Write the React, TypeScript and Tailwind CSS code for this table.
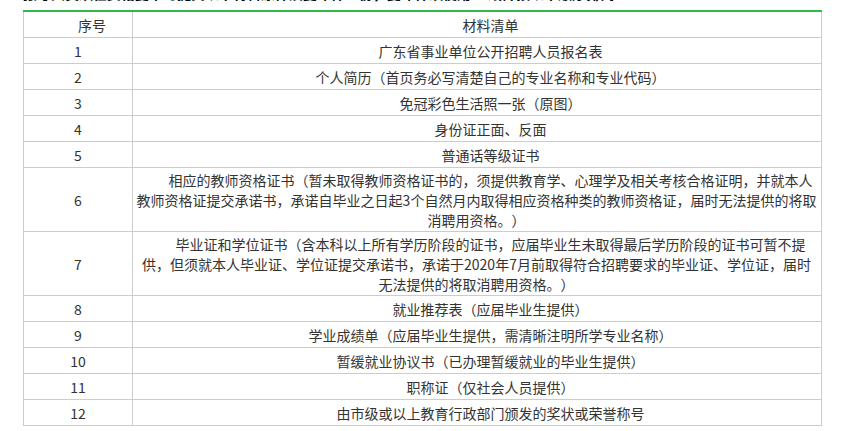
import React from "react";

type Row = { n: string; lines: string[] };

const rows: Row[] = [
  { n: "1", lines: ["广东省事业单位公开招聘人员报名表"] },
  { n: "2", lines: ["个人简历（首页务必写清楚自己的专业名称和专业代码）"] },
  { n: "3", lines: ["免冠彩色生活照一张（原图）"] },
  { n: "4", lines: ["身份证正面、反面"] },
  { n: "5", lines: ["普通话等级证书"] },
  {
    n: "6",
    lines: [
      "相应的教师资格证书（暂未取得教师资格证书的，须提供教育学、心理学及相关考核合格证明，并就本人",
      "教师资格证提交承诺书，承诺自毕业之日起3个自然月内取得相应资格种类的教师资格证，届时无法提供的将取",
      "消聘用资格。）",
    ],
  },
  {
    n: "7",
    lines: [
      "毕业证和学位证书（含本科以上所有学历阶段的证书，应届毕业生未取得最后学历阶段的证书可暂不提",
      "供，但须就本人毕业证、学位证提交承诺书，承诺于2020年7月前取得符合招聘要求的毕业证、学位证，届时",
      "无法提供的将取消聘用资格。）",
    ],
  },
  { n: "8", lines: ["就业推荐表（应届毕业生提供）"] },
  { n: "9", lines: ["学业成绩单（应届毕业生提供，需清晰注明所学专业名称）"] },
  { n: "10", lines: ["暂缓就业协议书（已办理暂缓就业的毕业生提供）"] },
  { n: "11", lines: ["职称证（仅社会人员提供）"] },
  { n: "12", lines: ["由市级或以上教育行政部门颁发的奖状或荣誉称号"] },
];

export default function App() {
  return (
    <div
      className="h-[431px] w-[842px] overflow-hidden bg-white text-[14px] leading-[20px] text-[#333333] [text-spacing-trim:space-all]"
      style={{ fontFamily: '"Noto Sans CJK SC", "Noto Sans", sans-serif' }}
    >
      <div className="-mt-[17px] mb-[7px] ml-[23px] w-[640px] overflow-hidden whitespace-nowrap font-bold text-black">
        报考人员须在资格复审时提交以下材料原件及复印件一份，复印件须使用A4纸并按以下顺序排列：
      </div>
      <div className="ml-[23px] w-[799px]">
        <div className="h-[2px] bg-[#2fb84f]" />
        <div className="border-x border-[#cccccc]">
          <div className="flex h-[26px] border-b border-[#cccccc]">
            <div className="flex w-[109px] shrink-0 items-center justify-center border-r border-[#cccccc] px-[3px] indent-[2em]">
              序号
            </div>
            <div className="flex w-[687px] items-center justify-center px-[3px] indent-[2em]">
              材料清单
            </div>
          </div>
          {rows.map((r) => {
            const multi = r.lines.length > 1;
            return (
              <div
                key={r.n}
                className={`flex border-b border-[#cccccc] ${multi ? "h-[64px]" : "h-[26px]"}`}
              >
                <div className="flex w-[109px] shrink-0 items-center justify-center border-r border-[#cccccc] px-[3px]">
                  {r.n}
                </div>
                <div className="flex w-[687px] items-center justify-center px-[3px]">
                  <p className="w-full whitespace-nowrap text-center indent-[2em]">
                    {r.lines.map((l, i) => (
                      <React.Fragment key={i}>
                        {i > 0 && <br />}
                        {l}
                      </React.Fragment>
                    ))}
                  </p>
                </div>
              </div>
            );
          })}
        </div>
      </div>
    </div>
  );
}
